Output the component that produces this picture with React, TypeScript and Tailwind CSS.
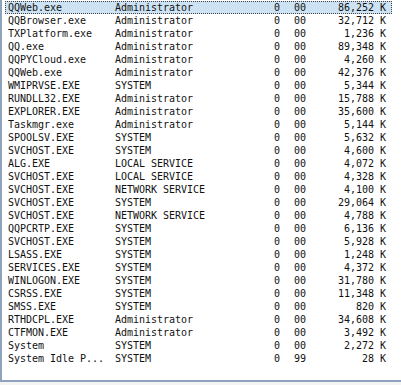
const procs: [string, string, string, string, string][] = [
  ['QQWeb.exe', 'Administrator', '0', '00', '86,252'],
  ['QQBrowser.exe', 'Administrator', '0', '00', '32,712'],
  ['TXPlatform.exe', 'Administrator', '0', '00', '1,236'],
  ['QQ.exe', 'Administrator', '0', '00', '89,348'],
  ['QQPYCloud.exe', 'Administrator', '0', '00', '4,260'],
  ['QQWeb.exe', 'Administrator', '0', '00', '42,376'],
  ['WMIPRVSE.EXE', 'SYSTEM', '0', '00', '5,344'],
  ['RUNDLL32.EXE', 'Administrator', '0', '00', '15,788'],
  ['EXPLORER.EXE', 'Administrator', '0', '00', '35,600'],
  ['Taskmgr.exe', 'Administrator', '0', '00', '5,144'],
  ['SPOOLSV.EXE', 'SYSTEM', '0', '00', '5,632'],
  ['SVCHOST.EXE', 'SYSTEM', '0', '00', '4,600'],
  ['ALG.EXE', 'LOCAL SERVICE', '0', '00', '4,072'],
  ['SVCHOST.EXE', 'LOCAL SERVICE', '0', '00', '4,328'],
  ['SVCHOST.EXE', 'NETWORK SERVICE', '0', '00', '4,100'],
  ['SVCHOST.EXE', 'SYSTEM', '0', '00', '29,064'],
  ['SVCHOST.EXE', 'NETWORK SERVICE', '0', '00', '4,788'],
  ['QQPCRTP.EXE', 'SYSTEM', '0', '00', '6,136'],
  ['SVCHOST.EXE', 'SYSTEM', '0', '00', '5,928'],
  ['LSASS.EXE', 'SYSTEM', '0', '00', '1,248'],
  ['SERVICES.EXE', 'SYSTEM', '0', '00', '4,372'],
  ['WINLOGON.EXE', 'SYSTEM', '0', '00', '31,780'],
  ['CSRSS.EXE', 'SYSTEM', '0', '00', '11,348'],
  ['SMSS.EXE', 'SYSTEM', '0', '00', '820'],
  ['RTHDCPL.EXE', 'Administrator', '0', '00', '34,608'],
  ['CTFMON.EXE', 'Administrator', '0', '00', '3,492'],
  ['System', 'SYSTEM', '0', '00', '2,272'],
  ['System Idle P...', 'SYSTEM', '0', '99', '28'],
];

export default function App() {
  return (
    <div className="w-[401px] h-[385px] bg-[#f4f4f4] overflow-hidden">
      {/* process list */}
      <div
        className="h-[382px] bg-white border-l-2 border-b-2 border-[#8ea3bb] pt-[1px] pl-[3px] text-[#111] text-[10px] leading-[13px] tracking-[-0.02px]"
        style={{ fontFamily: '"DejaVu Sans Mono", "Liberation Mono", monospace' }}
      >
        {procs.map(([name, user, cpu, prio, mem], i) => (
          <div
            key={i}
            className={
              i === 0
                ? 'flex h-[13px] w-[387px] items-center bg-[#cde3f3] outline outline-1 outline-dotted outline-[#444] -outline-offset-1'
                : 'flex h-[13px] w-[387px] items-center'
            }
          >
            <span className="w-[110px] pl-[3px] whitespace-nowrap overflow-hidden">{name}</span>
            <span className="w-[159px] whitespace-nowrap">{user}</span>
            <span className="w-[20px]">{cpu}</span>
            <span className="w-[20px]">{prio}</span>
            <span className="w-[72px] text-right whitespace-nowrap">{mem} K</span>
          </div>
        ))}
      </div>
    </div>
  );
}
